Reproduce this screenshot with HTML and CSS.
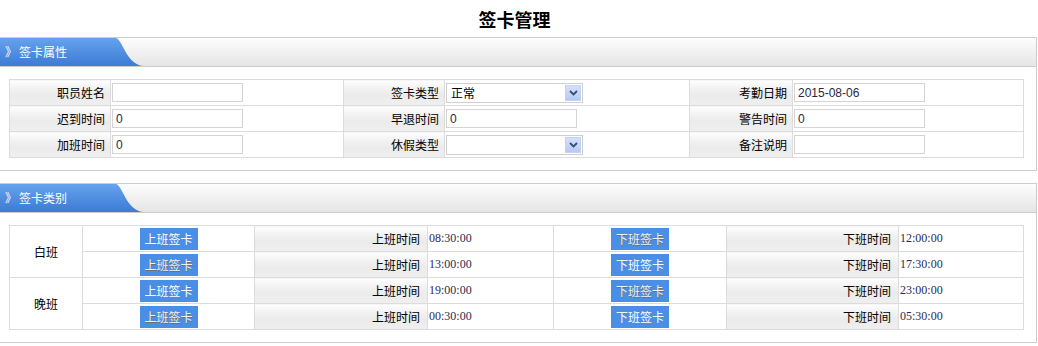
FILE: index.html
```html
<!DOCTYPE html>
<html lang="zh-CN">
<head>
<meta charset="utf-8">
<title>签卡管理</title>
<link rel="stylesheet" href="styles.css">
</head>
<body>
<div class="title">签卡管理</div>

<div class="panel">
  <div class="phead"><div class="tab"><span class="arr">》</span>签卡属性</div></div>
  <div class="pbody">
    <table class="grid form">
      <colgroup>
        <col class="fl1"><col class="fv1"><col class="fl2"><col class="fv2"><col class="fl3"><col class="fv3">
      </colgroup>
      <tr>
        <td class="lbl">职员姓名</td><td class="val"><input class="inp" type="text" value=""></td>
        <td class="lbl">签卡类型</td><td class="val"><div class="sel"><span class="sel-text">正常</span><span class="sel-btn"><svg width="9" height="6" viewBox="0 0 9 6"><path d="M1 1 L4.5 4.5 L8 1" fill="none" stroke="#3b4d75" stroke-width="1.8"/></svg></span></div></td>
        <td class="lbl">考勤日期</td><td class="val"><input class="inp" type="text" value="2015-08-06"></td>
      </tr>
      <tr>
        <td class="lbl">迟到时间</td><td class="val"><input class="inp" type="text" value="0"></td>
        <td class="lbl">早退时间</td><td class="val"><input class="inp" type="text" value="0"></td>
        <td class="lbl">警告时间</td><td class="val"><input class="inp" type="text" value="0"></td>
      </tr>
      <tr>
        <td class="lbl">加班时间</td><td class="val"><input class="inp" type="text" value="0"></td>
        <td class="lbl">休假类型</td><td class="val"><div class="sel"><span class="sel-text"></span><span class="sel-btn"><svg width="9" height="6" viewBox="0 0 9 6"><path d="M1 1 L4.5 4.5 L8 1" fill="none" stroke="#3b4d75" stroke-width="1.8"/></svg></span></div></td>
        <td class="lbl">备注说明</td><td class="val"><input class="inp" type="text" value=""></td>
      </tr>
    </table>
  </div>
</div>

<div class="panel">
  <div class="phead"><div class="tab"><span class="arr">》</span>签卡类别</div></div>
  <div class="pbody">
    <table class="grid shifts">
      <colgroup>
        <col class="s1"><col class="s2"><col class="s3"><col class="s4"><col class="s5"><col class="s6"><col class="s7">
      </colgroup>
      <tr>
        <td class="shift" rowspan="2">白班</td>
        <td class="bcell"><span class="btn">上班签卡</span></td>
        <td class="lbl lbl2">上班时间</td><td class="time">08:30:00</td>
        <td class="bcell"><span class="btn dim">下班签卡</span></td>
        <td class="lbl lbl2">下班时间</td><td class="time">12:00:00</td>
      </tr>
      <tr>
        <td class="bcell"><span class="btn dim">上班签卡</span></td>
        <td class="lbl lbl2">上班时间</td><td class="time">13:00:00</td>
        <td class="bcell"><span class="btn">下班签卡</span></td>
        <td class="lbl lbl2">下班时间</td><td class="time">17:30:00</td>
      </tr>
      <tr>
        <td class="shift" rowspan="2">晚班</td>
        <td class="bcell"><span class="btn">上班签卡</span></td>
        <td class="lbl lbl2">上班时间</td><td class="time">19:00:00</td>
        <td class="bcell"><span class="btn dim">下班签卡</span></td>
        <td class="lbl lbl2">下班时间</td><td class="time">23:00:00</td>
      </tr>
      <tr>
        <td class="bcell"><span class="btn dim">上班签卡</span></td>
        <td class="lbl lbl2">上班时间</td><td class="time">00:30:00</td>
        <td class="bcell"><span class="btn">下班签卡</span></td>
        <td class="lbl lbl2">下班时间</td><td class="time">05:30:00</td>
      </tr>
    </table>
  </div>
</div>
</body>
</html>
```

FILE: styles.css
```css
body {
  margin: 0;
  width: 1038px;
  background: #fff;
  color: #000;
  font-family: "Noto Sans CJK SC", "Liberation Sans", sans-serif;
  font-size: 12px;
}

.title {
  height: 37px;
  line-height: 38px;
  text-align: center;
  padding-right: 9px;
  font-size: 18px;
  font-weight: bold;
}

.panel {
  width: 1036px;
  border: 1px solid #cccccc;
  border-left: none;
}
.panel + .panel {
  margin-top: 12px;
}

.phead {
  height: 28px;
  border-bottom: 1px solid #cccccc;
  background: linear-gradient(to bottom, #fdfdfd, #e5e5e5);
}

.tab {
  width: 143px;
  height: 28px;
  box-sizing: border-box;
  padding-left: 5px;
  line-height: 28px;
  color: #fff;
  background: linear-gradient(to bottom, #66a2ec, #3c7bd5);
  clip-path: path('M0 0 H116 C123 2 126 26 143 28 H0 Z');
}
.arr {
  display: inline-block;
  width: 14px;
}

.pbody {
  padding: 12px 0 12px 9px;
}

.grid {
  border-collapse: collapse;
  table-layout: fixed;
  width: 1014px;
}
.grid tr {
  height: 26px;
}
.grid td {
  border: 1px solid #dcdcdc;
  padding: 0;
  vertical-align: middle;
  white-space: nowrap;
}

.fl1 { width: 101px; }
.fv1 { width: 233px; }
.fl2 { width: 101px; }
.fv2 { width: 245px; }
.fl3 { width: 103px; }
.fv3 { width: 231px; }

.s1 { width: 73px; }
.s2 { width: 172px; }
.s3 { width: 173px; }
.s4 { width: 126px; }
.s5 { width: 173px; }
.s6 { width: 172px; }
.s7 { width: 125px; }

.lbl {
  text-align: right;
  padding-right: 5px !important;
  background: linear-gradient(to bottom, #fefefe 0%, #f1f1f1 35%, #ebebeb 60%, #efefef 100%);
}
.lbl2 {
  padding-right: 7px !important;
}

.inp {
  display: block;
  box-sizing: border-box;
  width: 131px;
  height: 19px;
  margin: 0 0 0 1px;
  padding: 0 3px;
  border: 1px solid #d4d4d4;
  background: #fff;
  color: #2e2640;
  font-family: "Liberation Sans", Arial, sans-serif;
  font-size: 12px;
  outline: none;
}

.sel {
  display: flex;
  align-items: center;
  justify-content: space-between;
  box-sizing: border-box;
  width: 137px;
  height: 20px;
  margin-left: 1px;
  padding: 0 1px 0 4px;
  border: 1px solid #cfcfcf;
  background: #fff;
}
.sel-text {
  font-size: 12px;
}
.sel-btn {
  display: flex;
  align-items: center;
  justify-content: center;
  box-sizing: border-box;
  width: 16px;
  height: 16px;
  border: 1px solid #c3d3f5;
  background: linear-gradient(to bottom, #d5e1fb, #b5c9f3);
}

.shift {
  text-align: center;
}
.bcell {
  text-align: center;
}
.btn {
  display: inline-block;
  width: 58px;
  height: 22px;
  line-height: 22px;
  vertical-align: middle;
  background: #4a8ee6;
  color: #fff;
  font-size: 12px;
}
.btn.dim {
  color: #f2f2f2;
  text-shadow: 1px 1px 0 #6f6f6f;
}

.time {
  padding-left: 1px !important;
  font-family: "Liberation Serif", "Times New Roman", serif;
  font-size: 12px;
  color: #2c2a50;
}
```
